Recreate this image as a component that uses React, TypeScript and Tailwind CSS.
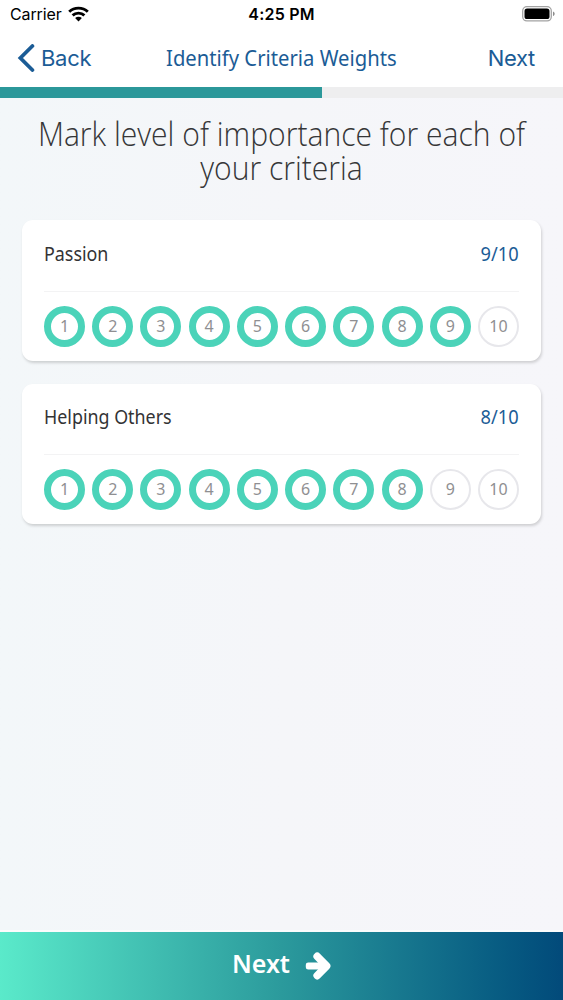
import React from "react";

const SCALE = [1, 2, 3, 4, 5, 6, 7, 8, 9, 10];

function StatusBar() {
  return (
    <div className="grid h-[29px] grid-cols-3 items-center px-[10px] text-black">
      <div className="flex items-center gap-[6px]">
        <span className="font-[Inter,sans-serif] text-[16px] leading-[29px] tracking-[-0.12px]">Carrier</span>
        <svg className="-mt-[2px]" width="21" height="16" viewBox="0 0 21 16" fill="none" stroke="#000" strokeWidth="2.9">
          <path d="M1.2 5.8C6.3.9 14.7.9 19.8 5.8" />
          <path d="M4.6 9.4c3.3-3.1 8.5-3.1 11.8 0" />
          <path d="M7.1 12c2-1.8 4.8-1.8 6.8 0L10.5 15.4z" fill="#000" stroke="none" />
        </svg>
      </div>
      <span className="text-center font-[Inter,sans-serif] text-[16px] leading-[29px] font-semibold tracking-[0.2px]">
        4:25 PM
      </span>
      <svg className="-mr-[2px] -mt-[2px] justify-self-end" width="33" height="16" viewBox="0 0 33 16">
        <rect x="0.7" y="0.7" width="28.6" height="14.2" rx="4.2" fill="none" stroke="#a3a3a3" strokeWidth="1.3" />
        <rect x="2.5" y="2.5" width="25" height="10.6" rx="2.6" fill="#000" />
        <path d="M31 5.5c2.2.8 2.2 3.8 0 4.6z" fill="#8c8c8c" />
      </svg>
    </div>
  );
}

function NavBar() {
  return (
    <div className="grid h-[58px] grid-cols-[1fr_auto_1fr] items-center px-[17px] text-[22px] text-[#1b5c96]">
      <div className="flex items-center gap-[6px]">
        <svg width="18" height="28" viewBox="0 0 18 28" fill="none" stroke="#1b5c96" strokeWidth="3.8" strokeLinecap="round">
          <path d="M15.4 2 3.4 14l12 12" />
        </svg>
        <span className="font-[Inter,sans-serif] tracking-[-0.3px]">Back</span>
      </div>
      <h1 className="-mt-[2px] scale-x-[0.92] font-['Noto_Sans',sans-serif] text-[22px] whitespace-nowrap">
        Identify Criteria Weights
      </h1>
      <span className="pr-[11px] text-right font-[Inter,sans-serif] tracking-[-0.3px]">Next</span>
    </div>
  );
}

function CriterionCard({ name, value, compact = false }: { name: string; value: number; compact?: boolean }) {
  return (
    <section
      className={
        "rounded-[11px] bg-white px-[22px] shadow-[1px_2px_3px_rgba(0,0,0,0.16)] " +
        (compact ? "h-[140px]" : "h-[141px]")
      }
    >
      <div
        className={
          "flex items-center justify-between border-b border-[#f3f3f4] font-['Noto_Sans',sans-serif] text-[19px] " +
          (compact ? "h-[71px] pb-[4px]" : "h-[72px] pb-[2px]")
        }
      >
        <span className="origin-left scale-x-[0.94] text-[#333335]">{name}</span>
        <span className="origin-right scale-x-[0.96] text-[#1b5c96]">{value}/10</span>
      </div>
      <div className="mt-[14px] flex justify-between">
        {SCALE.map((n) => (
          <span
            key={n}
            className={
              "flex h-[41px] w-[41px] items-center justify-center rounded-full pb-[2px] font-['Noto_Sans',sans-serif] text-[16px] leading-none text-[#8f8f92] " +
              (n <= value ? "border-[7px] border-[#4bd3b9]" : "border-[2px] border-[#e7e7eb]")
            }
          >
            {n}
          </span>
        ))}
      </div>
    </section>
  );
}

export default function App() {
  return (
    <div className="flex h-[1000px] w-[563px] flex-col overflow-hidden bg-linear-to-r from-[#f3f7f9] via-[#f5f6f9] to-[#f6f6fa]">
      <header className="bg-white">
        <StatusBar />
        <NavBar />
        <div className="h-[11px] bg-[#eeeeef]">
          <div className="h-full w-[322px] bg-[#2b989a]" />
        </div>
      </header>
      <main className="flex flex-1 flex-col border-b-2 border-[#fbfcfc]">
        <h2 className="mt-[19px] scale-x-[0.912] text-center font-['Open_Sans','Noto_Sans',sans-serif] text-[33px] leading-[34px] font-light whitespace-nowrap text-[#363638]">
          Mark level of importance for each of
          <br />
          your criteria
        </h2>
        <div className="mt-[35px] flex flex-col gap-[23px] px-[22px]">
          <CriterionCard name="Passion" value={9} />
          <CriterionCard name="Helping Others" value={8} compact />
        </div>
      </main>
      <button className="flex h-[68px] w-full items-center justify-center gap-[13px] bg-linear-to-r from-[#5aeaca] via-[#2b9a9c] to-[#024a7a] font-['Noto_Sans',sans-serif] text-[26px] font-semibold text-white">
        <span className="-mt-[5px] origin-left scale-x-[0.96]">Next</span>
        <svg className="-mt-px" width="26" height="28" viewBox="0 0 26 28" fill="none" stroke="#fff" strokeLinecap="round" strokeLinejoin="round">
          <path d="M3.2 12.8v2.4h17.6v-2.4z" fill="#fff" strokeWidth="4.8" />
          <path d="M12.2 4.4 21.6 14l-9.4 9.6" strokeWidth="7.6" />
        </svg>
      </button>
    </div>
  );
}
